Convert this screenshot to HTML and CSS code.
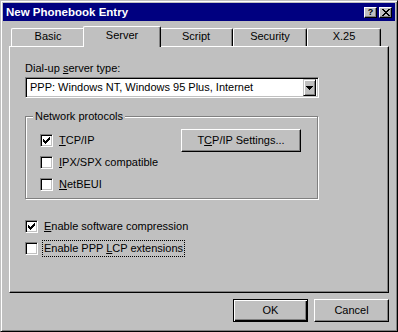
FILE: index.html
```html
<!DOCTYPE html>
<html lang="en">
<head>
  <meta charset="UTF-8">
  <title>New Phonebook Entry</title>
  <link rel="stylesheet" href="styles.css">
</head>
<body>

  <div class="window">
    <div class="titlebar">
      <span class="title">New Phonebook Entry</span>
      <div class="caption-buttons">
        <span class="cap-btn">?</span>
        <span class="cap-btn">
          <svg width="8" height="7" viewBox="0 0 8 7" shape-rendering="crispEdges">
            <path d="M0 0h2v1h1v1h2v-1h1v-1h2v1h-1v1h-1v1h-1v1h1v1h1v1h1v1h-2v-1h-1v-1h-2v1h-1v1h-2v-1h1v-1h1v-1h1v-1h-1v-1h-1v-1h-1z" fill="#000"/>
          </svg>
        </span>
      </div>
    </div>

    <div class="tabs">
      <div class="tab">Basic</div>
      <div class="tab active">Server</div>
      <div class="tab">Script</div>
      <div class="tab">Security</div>
      <div class="tab">X.25</div>
    </div>

    <div class="panel">
      <div class="field-label">Dial-up <u>s</u>erver type:</div>
      <div class="combo">
        <span class="combo-text">PPP: Windows NT, Windows 95 Plus, Internet</span>
        <span class="combo-btn">
          <svg width="7" height="4" viewBox="0 0 7 4" shape-rendering="crispEdges">
            <path d="M0 0h7v1h-1v1h-1v1h-1v1h-1v-1h-1v-1h-1v-1h-1z" fill="#000"/>
          </svg>
        </span>
      </div>

      <div class="group">
        <div class="group-label">Network protocols</div>
        <div class="group-body">
          <div class="check-list">
            <div class="check-row">
              <span class="check checked">
                <svg width="7" height="7" viewBox="0 0 7 7" shape-rendering="crispEdges"><path d="M6 0h1v3h-1v1h-1v1h-1v1h-1v1h-1v-1h-1v-1h-1v-3h1v1h1v1h1v-1h1v-1h1z" fill="#000"/></svg>
              </span>
              <span class="check-label"><u>T</u>CP/IP</span>
            </div>
            <div class="check-row">
              <span class="check"></span>
              <span class="check-label"><u>I</u>PX/SPX compatible</span>
            </div>
            <div class="check-row">
              <span class="check"></span>
              <span class="check-label"><u>N</u>etBEUI</span>
            </div>
          </div>
          <span class="btn settings">T<u>C</u>P/IP Settings...</span>
        </div>
      </div>

      <div class="check-list options">
        <div class="check-row">
          <span class="check checked">
            <svg width="7" height="7" viewBox="0 0 7 7" shape-rendering="crispEdges"><path d="M6 0h1v3h-1v1h-1v1h-1v1h-1v1h-1v-1h-1v-1h-1v-3h1v1h1v1h1v-1h1v-1h1z" fill="#000"/></svg>
          </span>
          <span class="check-label"><u>E</u>nable software compression</span>
        </div>
        <div class="check-row">
          <span class="check"></span>
          <span class="check-label focus">Enable PPP <u>L</u>CP extensions</span>
        </div>
      </div>
    </div>

    <div class="footer">
      <span class="btn default">OK</span>
      <span class="btn">Cancel</span>
    </div>
  </div>

</body>
</html>
```

FILE: styles.css
```css
body {
  margin: 0;
  font-family: "Liberation Sans", Arial, sans-serif;
  font-size: 11px;
  line-height: 13px;
  color: #000;
  background: #c0c0c0;
}

u {
  text-decoration: underline;
  text-underline-offset: 1px;
}

.window {
  width: 398px;
  height: 332px;
  box-sizing: border-box;
  padding: 2px;
  background: #c0c0c0;
  border: 1px solid;
  border-color: #c0c0c0 #000 #000 #c0c0c0;
  box-shadow: inset 1px 1px #fff, inset -1px -1px #808080;
  display: flex;
  flex-direction: column;
}

/* title bar */
.titlebar {
  height: 18px;
  background: #000080;
  display: flex;
  align-items: center;
  justify-content: space-between;
  padding: 0 3px;
}

.title {
  color: #fff;
  font-size: 11.5px;
  font-weight: bold;
}

.caption-buttons {
  display: flex;
  gap: 2px;
}

.cap-btn {
  width: 13px;
  height: 11px;
  box-sizing: border-box;
  background: #c0c0c0;
  border: 1px solid;
  border-color: #fff #000 #000 #fff;
  box-shadow: inset -1px -1px #808080;
  display: flex;
  align-items: center;
  justify-content: center;
  font-size: 9px;
  font-weight: bold;
  line-height: 9px;
}

/* tabs */
.tabs {
  height: 20px;
  margin-top: 5px;
  padding-left: 8px;
  display: flex;
  align-items: flex-end;
}

.tab {
  width: 74px;
  height: 18px;
  box-sizing: border-box;
  padding-top: 1px;
  text-align: center;
  border: 1px solid;
  border-bottom: none;
  border-color: #fff #000 #000 #fff;
  border-radius: 2px 2px 0 0;
  box-shadow: inset -1px 0 #808080;
}

.tab.active {
  position: relative;
  z-index: 1;
  width: 78px;
  height: 21px;
  margin: 0 -2px -1px;
  padding-top: 2px;
  background: #c0c0c0;
}

/* page */
.panel {
  height: 247px;
  margin: 0 6px;
  box-sizing: border-box;
  padding: 15px 0 0 15px;
  border: 1px solid;
  border-color: #fff #000 #000 #fff;
  box-shadow: inset -1px -1px #808080;
}

.field-label {
  margin-bottom: 2px;
}

.combo {
  width: 294px;
  height: 21px;
  box-sizing: border-box;
  padding: 2px;
  background: #fff;
  border: 1px solid;
  border-color: #808080 #fff #fff #808080;
  box-shadow: inset 1px 1px #000, inset -1px -1px #c0c0c0;
  display: flex;
  align-items: center;
}

.combo-text {
  flex: 1;
  padding-left: 2px;
}

.combo-btn {
  width: 13px;
  height: 17px;
  box-sizing: border-box;
  background: #c0c0c0;
  border: 1px solid;
  border-color: #c0c0c0 #000 #000 #c0c0c0;
  box-shadow: inset 1px 1px #fff, inset -1px -1px #808080;
  display: flex;
  align-items: center;
  justify-content: center;
}

.group {
  width: 293px;
  margin-top: 18px;
  box-sizing: border-box;
  padding: 0 16px 5px 14px;
  border: 1px solid #808080;
  box-shadow: inset 1px 1px #fff, 1px 1px #fff;
}

.group-label {
  width: fit-content;
  margin: -7px 0 0 -7px;
  padding: 0 2px;
  background: #c0c0c0;
}

.group-body {
  display: flex;
  justify-content: space-between;
  align-items: flex-start;
}

.group-body .check-list {
  padding-top: 9px;
}

.check-list {
  display: flex;
  flex-direction: column;
  gap: 5px;
}

.options {
  margin-top: 19px;
}

.check-row {
  display: flex;
  align-items: center;
  height: 17px;
}

.check {
  width: 13px;
  height: 13px;
  box-sizing: border-box;
  background: #fff;
  border: 1px solid;
  border-color: #808080 #fff #fff #808080;
  box-shadow: inset 1px 1px #000, inset -1px -1px #c0c0c0;
  display: flex;
  align-items: center;
  justify-content: center;
}

.check-label {
  margin-left: 4px;
  padding: 1px;
  border: 1px dotted transparent;
}

.check-label.focus {
  border-color: #000;
}

/* buttons */
.btn {
  width: 75px;
  height: 23px;
  box-sizing: border-box;
  background: #c0c0c0;
  border: 1px solid;
  border-color: #fff #000 #000 #fff;
  box-shadow: inset -1px -1px #808080;
  display: flex;
  align-items: center;
  justify-content: center;
}

.btn.default {
  border-color: #000;
  box-shadow: inset 1px 1px #fff, inset -1px -1px #000, inset -2px -2px #808080;
}

.settings {
  width: 120px;
  margin-top: 6px;
}

.footer {
  display: flex;
  justify-content: flex-end;
  gap: 6px;
  margin-top: 6px;
  padding-right: 6px;
}
```
